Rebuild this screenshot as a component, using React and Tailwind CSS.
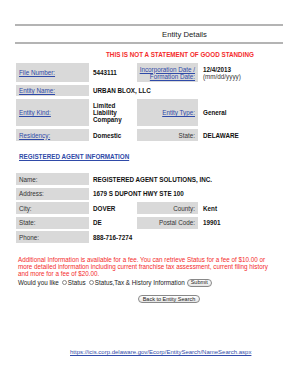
import React from 'react';

const font = { fontFamily: '"Liberation Sans", Arial, sans-serif' };

function Label({ children, link, right, className = '' }) {
  return (
    <div
      className={`bg-[#d9d9d9] h-full flex items-center whitespace-nowrap ${right ? 'justify-end text-right pr-[3px]' : 'pl-[3px]'} ${className}`}
    >
      <span className={link ? 'text-[#2f4aa8] underline' : 'text-[#333]'}>{children}</span>
    </div>
  );
}

function Value({ children, className = '' }) {
  return <div className={`h-full flex items-center font-bold text-[#111] ${className}`}>{children}</div>;
}

function Row({ h, children }) {
  return <div className={`flex ${h}`}>{children}</div>;
}

export default function App() {
  return (
    <div className="w-[298px] h-[386px] bg-white overflow-hidden text-[6.3px] leading-[7px] text-[#111]" style={font}>
      <div className="pt-[24px] px-[15px]">
        <div className="h-[2px] bg-[#b4b4b4]" />
        <div className="h-[16px] flex items-center justify-center pl-[71px] text-[7.7px] text-[#222]">
          Entity Details
        </div>
        <div className="h-[2px] bg-[#b4b4b4]" />
      </div>

      <div className="mt-[7px] pl-[106px] font-bold text-[#f42b2b] leading-[8px]">
        THIS IS NOT A STATEMENT OF GOOD STANDING
      </div>

      {/* entity table */}
      <div className="mt-[4px] ml-[16px] w-[256px] flex flex-col gap-[3px]">
        <Row h="h-[19px]">
          <div className="w-[73px]"><Label link>File Number:</Label></div>
          <Value className="w-[48px] pl-[4px]">5443111</Value>
          <div className="w-[61px]">
            <Label link right>Incorporation Date /<br />Formation Date:</Label>
          </div>
          <div className="flex-1 pl-[5px] flex flex-col justify-center">
            <span className="font-bold">12/4/2013</span>
            <span className="text-[#333]">(mm/dd/yyyy)</span>
          </div>
        </Row>
        <Row h="h-[11px]">
          <div className="w-[73px]"><Label link>Entity Name:</Label></div>
          <Value className="flex-1 pl-[4px]">URBAN BLOX, LLC</Value>
        </Row>
        <Row h="h-[27px]">
          <div className="w-[73px]"><Label link>Entity Kind:</Label></div>
          <Value className="w-[48px] pl-[4px]">Limited<br />Liability<br />Company</Value>
          <div className="w-[61px]"><Label link right>Entity Type:</Label></div>
          <Value className="flex-1 pl-[5px]">General</Value>
        </Row>
        <Row h="h-[12px]">
          <div className="w-[73px]"><Label link>Residency:</Label></div>
          <Value className="w-[48px] pl-[4px]">Domestic</Value>
          <div className="w-[61px]"><Label right>State:</Label></div>
          <Value className="flex-1 pl-[5px]">DELAWARE</Value>
        </Row>
      </div>

      <div className="mt-[12px] ml-[19px] h-[8px] leading-[8px] font-bold text-[#2f4aa8] underline">
        REGISTERED AGENT INFORMATION
      </div>

      {/* agent table */}
      <div className="mt-[12px] ml-[16px] w-[256px] flex flex-col gap-[2.5px]">
        <Row h="h-[12px]">
          <div className="w-[73px]"><Label>Name:</Label></div>
          <Value className="flex-1 pl-[4px]">REGISTERED AGENT SOLUTIONS, INC.</Value>
        </Row>
        <Row h="h-[12px]">
          <div className="w-[73px]"><Label>Address:</Label></div>
          <Value className="flex-1 pl-[4px]">1679 S DUPONT HWY STE 100</Value>
        </Row>
        <Row h="h-[12px]">
          <div className="w-[73px]"><Label>City:</Label></div>
          <Value className="w-[48px] pl-[4px]">DOVER</Value>
          <div className="w-[61px]"><Label right>County:</Label></div>
          <Value className="flex-1 pl-[5px]">Kent</Value>
        </Row>
        <Row h="h-[12px]">
          <div className="w-[73px]"><Label>State:</Label></div>
          <Value className="w-[48px] pl-[4px]">DE</Value>
          <div className="w-[61px]"><Label right>Postal Code:</Label></div>
          <Value className="flex-1 pl-[5px]">19901</Value>
        </Row>
        <Row h="h-[12px]">
          <div className="w-[73px]"><Label>Phone:</Label></div>
          <Value className="flex-1 pl-[4px]">888-716-7274</Value>
        </Row>
      </div>

      <div className="mt-[13px] ml-[18px] w-[256px] text-[#f42b2b]">
        Additional Information is available for a fee. You can retrieve Status for a fee of $10.00 or more
        detailed information including current franchise tax assessment, current filing history and more
        for a fee of $20.00.
      </div>

      <div className="ml-[18px] mt-[1px] flex items-center gap-[1px] h-[9px] text-[#222]">
        <span>Would you like</span>
        <span className="ml-[2px] w-[5px] h-[5px] rounded-full border border-[#888] bg-white" />
        <span>Status</span>
        <span className="ml-[2px] w-[5px] h-[5px] rounded-full border border-[#888] bg-white" />
        <span>Status,Tax &amp; History Information</span>
        <span className="ml-[1px] h-[8px] px-[3px] flex items-center rounded-full border border-[#888] bg-gradient-to-b from-white to-[#e6e6e6] text-[5.5px]">
          Submit
        </span>
      </div>

      <div className="mt-[8px] flex justify-center pl-[40px]">
        <span className="h-[8px] px-[4px] flex items-center rounded-full border border-[#888] bg-gradient-to-b from-white to-[#e6e6e6] text-[5.5px] text-[#222]">
          Back to Entity Search
        </span>
      </div>

      <div className="mt-[46px] pl-[70px] text-[6px] text-[#2f4aa8] underline">
        https://icis.corp.delaware.gov/Ecorp/EntitySearch/NameSearch.aspx
      </div>
    </div>
  );
}
